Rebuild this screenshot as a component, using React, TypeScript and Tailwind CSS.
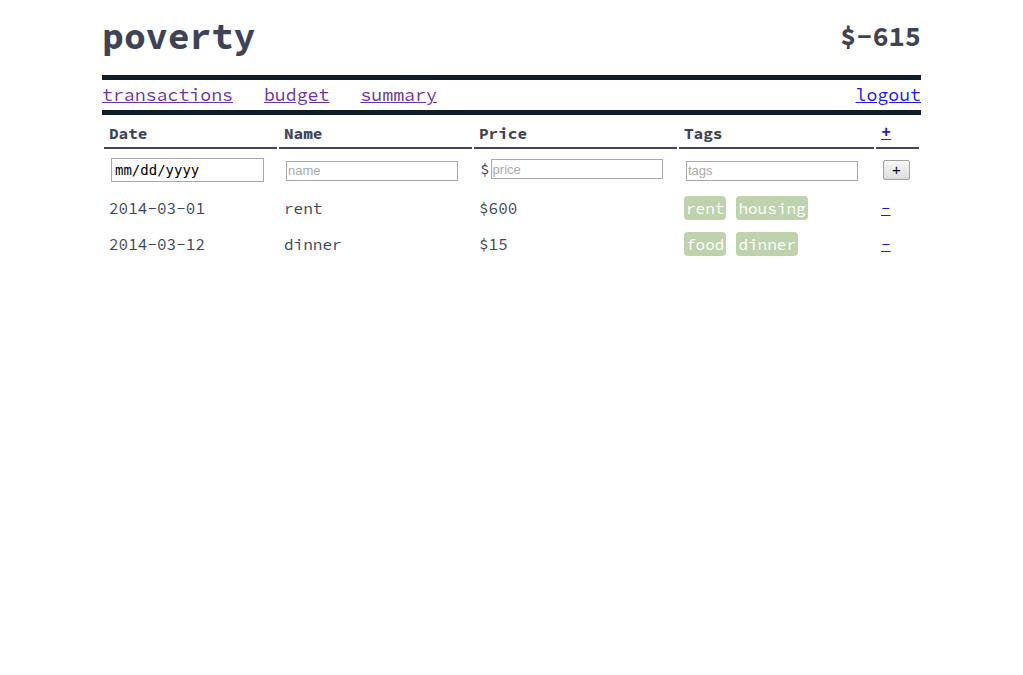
import React from "react";

const mono = "font-['Source_Code_Pro','DejaVu_Sans_Mono','Liberation_Mono',monospace]";

function Tag({ t }: { t: string }) {
  return (
    <span className="inline-block h-[24px] leading-[24px] px-[2px] rounded-[4px] bg-[#bed2ae] text-white mr-[10px]">
      {t}
    </span>
  );
}

const rows = [
  { date: "2014-03-01", name: "rent", price: "$600", tags: ["rent", "housing"] },
  { date: "2014-03-12", name: "dinner", price: "$15", tags: ["food", "dinner"] },
];

const inputCls =
  "w-[172px] h-[20px] border border-[#a9a9a9] px-[1px] text-[13px] font-['Liberation_Sans',Arial,sans-serif] placeholder:text-[#a9a9a9] outline-none";

export default function App() {
  return (
    <div className={`min-h-[675px] bg-white text-[#3e4356] ${mono}`}>
      <div className="w-[819px] mx-auto">
        <div className="flex items-center justify-between h-[75px] pb-[3px]">
          <h1 className="text-[36.5px] font-bold leading-none">poverty</h1>
          <div className="text-[27px] font-bold leading-none">$-615</div>
        </div>
        <div className="h-[5px] bg-[#0f1f26]" />
        <nav className="flex items-center h-[30px] text-[18.2px]">
          <a href="#" className="underline text-[#6a35a0] mr-[31px]">transactions</a>
          <a href="#" className="underline text-[#6a35a0] mr-[31px]">budget</a>
          <a href="#" className="underline text-[#6a35a0]">summary</a>
          <a href="#" className="underline text-[#1a1aee] ml-auto">logout</a>
        </nav>
        <div className="h-[5px] bg-[#0f1f26]" />
        <table className="border-separate border-spacing-[2px] w-[819px] text-[16px] mt-[1px]">
          <thead>
            <tr className="text-left h-[31px]">
              <th className="w-[173px] font-bold px-[5px] border-b-2 border-[#42475a]">Date</th>
              <th className="w-[193px] font-bold px-[5px] border-b-2 border-[#42475a]">Name</th>
              <th className="w-[203px] font-bold px-[5px] border-b-2 border-[#42475a]">Price</th>
              <th className="w-[195px] font-bold px-[5px] border-b-2 border-[#42475a]">Tags</th>
              <th className="font-bold px-[5px] border-b-2 border-[#42475a]">
                <a href="#" className="underline text-[#1a1aee] text-[17px]">+</a>
              </th>
            </tr>
          </thead>
          <tbody>
            <tr className="h-[38px]">
              <td className="px-[7px] pb-[2px]">
                <input
                  readOnly
                  defaultValue="mm/dd/yyyy"
                  className="w-[153px] h-[24px] border border-[#a9a9a9] px-[3px] text-[14px] text-black font-['DejaVu_Sans_Mono',monospace] outline-none"
                />
              </td>
              <td className="px-[7px] pb-[2px]">
                <input placeholder="name" className={inputCls} />
              </td>
              <td className="px-[6px] pb-[2px]">
                <div className="flex items-center">
                  <span className="mr-[1px]">$</span>
                  <input placeholder="price" className={inputCls} />
                </div>
              </td>
              <td className="px-[7px] pb-[2px]">
                <input placeholder="tags" className={inputCls} />
              </td>
              <td className="px-[7px] pb-[2px]">
                <button className="w-[27px] h-[20px] border border-[#a0a0a0] rounded-[2px] bg-gradient-to-b from-[#f8f8f8] to-[#dddddd] text-black text-[15px] leading-none font-['Liberation_Sans',Arial,sans-serif]">
                  +
                </button>
              </td>
            </tr>
            {rows.map((r) => (
              <tr key={r.date} className="h-[34px]">
                <td className="px-[5px]">{r.date}</td>
                <td className="px-[5px]">{r.name}</td>
                <td className="px-[5px]">{r.price}</td>
                <td className="px-[5px]">
                  {r.tags.map((t) => (
                    <Tag key={t} t={t} />
                  ))}
                </td>
                <td className="px-[5px]">
                  <a href="#" className="underline text-[#1a1aee]">-</a>
                </td>
              </tr>
            ))}
          </tbody>
        </table>
      </div>
    </div>
  );
}
